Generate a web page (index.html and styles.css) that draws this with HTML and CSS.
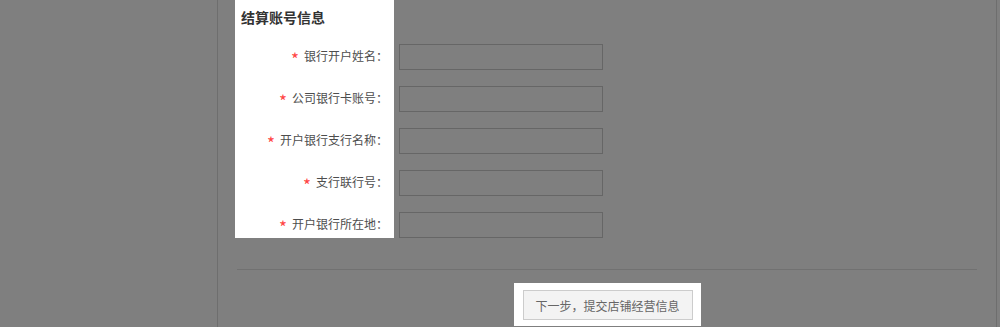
FILE: index.html
```html
<!DOCTYPE html>
<html lang="zh-CN">
<head>
  <meta charset="UTF-8" />
  <title>结算账号信息</title>
  <link rel="stylesheet" href="styles.css">
</head>
<body>
  <div class="page">
    <div class="form">
      <div class="labels">
        <h3>结算账号信息</h3>
        <div class="label"><em>*</em>银行开户姓名：</div>
        <div class="label"><em>*</em>公司银行卡账号：</div>
        <div class="label"><em>*</em>开户银行支行名称：</div>
        <div class="label"><em>*</em>支行联行号：</div>
        <div class="label"><em>*</em>开户银行所在地：</div>
      </div>
      <div class="fields">
        <input type="text" class="field">
        <input type="text" class="field">
        <input type="text" class="field">
        <input type="text" class="field">
        <input type="text" class="field">
      </div>
    </div>

    <div class="footer">
      <div class="btn-wrap">
        <button class="btn">下一步，提交店铺经营信息</button>
      </div>
    </div>
  </div>
</body>
</html>
```

FILE: styles.css
```css
body {
  margin: 0;
  background: #7f7f7f;
  font-family: "Noto Sans CJK SC", "Liberation Sans", sans-serif;
  font-size: 12px;
}

.page {
  margin-left: 217px;
  width: 761px;
  height: 327px;
  padding-left: 17px;
  border-left: 1px solid #6e6e6e;
  border-right: 1px solid #6e6e6e;
}

.form {
  display: flex;
  gap: 5px;
}

.labels {
  width: 159px;
  background: #fff;
}

.labels h3 {
  margin: 0;
  padding: 6px 0 0 6px;
  height: 22px;
  line-height: 22px;
  font-size: 14px;
  font-weight: bold;
  color: #333;
}

.label {
  margin-top: 16px;
  height: 26px;
  line-height: 24px;
  padding-right: 6px;
  text-align: right;
  color: #4d4d4d;
}

.label em {
  font-style: normal;
  font-size: 17px;
  line-height: 1;
  vertical-align: -5px;
  color: #f44;
  margin-right: 5px;
}

.fields {
  display: flex;
  flex-direction: column;
  padding-top: 28px;
}

.field {
  box-sizing: border-box;
  width: 204px;
  height: 26px;
  margin: 16px 0 0;
  border: 1px solid #666;
  background: transparent;
}

.footer {
  margin: 31px 0 0 2px;
  width: 740px;
  border-top: 1px solid #717171;
  padding-top: 13px;
  display: flex;
  justify-content: center;
}

.btn-wrap {
  background: #fff;
  padding: 7px 8px 6px 9px;
}

.btn {
  display: block;
  width: 170px;
  height: 30px;
  border: 1px solid #ccc;
  background: #f3f3f3;
  color: #666;
  font-family: "Noto Sans CJK SC", "Liberation Sans", sans-serif;
  font-size: 12px;
  padding: 0;
}
```
